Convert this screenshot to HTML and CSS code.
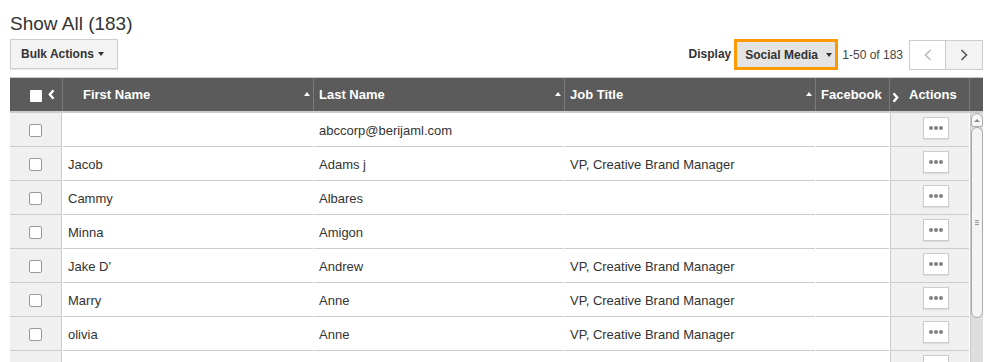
FILE: index.html
```html
<!DOCTYPE html>
<html lang="en">
<head>
    <meta charset="UTF-8">
    <title>Show All</title>
    <link rel="stylesheet" href="styles.css">
</head>
<body>
<div class="page">
    <h1 class="title">Show All (183)</h1>

    <div class="toolbar">
        <a href="#" class="btn btn_bulk">Bulk Actions <i class="caret"></i></a>
        <div class="toolbar_right">
            <span class="display_label">Display</span>
            <div class="display_box">
                <a href="#" class="btn btn_display">Social Media <i class="caret"></i></a>
            </div>
            <span class="count">1-50 of 183</span>
            <div class="pager">
                <a href="#" class="pg pg_prev">
                    <svg width="8" height="12" viewBox="0 0 8 12"><polyline points="6.5,1 1.5,6 6.5,11" fill="none" stroke="#bbb" stroke-width="1.6"/></svg>
                </a>
                <a href="#" class="pg pg_next">
                    <svg width="8" height="12" viewBox="0 0 8 12"><polyline points="1.5,1 6.5,6 1.5,11" fill="none" stroke="#555" stroke-width="1.6"/></svg>
                </a>
            </div>
        </div>
    </div>

    <div class="grid">
        <div class="grid_head">
            <div class="hcell hcell_cb">
                <span class="hbox"></span>
                <svg width="7" height="11" viewBox="0 0 7 11"><polyline points="5.5,1.2 1.8,5.5 5.5,9.8" fill="none" stroke="#fff" stroke-width="2.4"/></svg>
            </div>
            <div class="hcell hcell_first">First Name <i class="sort"></i></div>
            <div class="hcell">Last Name <i class="sort"></i></div>
            <div class="hcell">Job Title <i class="sort"></i></div>
            <div class="hcell">Facebook</div>
            <div class="hcell hcell_actions">
                <svg class="more_cols" width="7" height="11" viewBox="0 0 7 11"><polyline points="1.5,1.2 5.2,5.5 1.5,9.8" fill="none" stroke="#fff" stroke-width="2.4"/></svg>
                Actions
            </div>
            <div class="hcell hcell_scroll"></div>
        </div>

        <div class="grid_body">
            <div class="rows">
                <div class="cell cell_cb"><span class="cbox"></span></div>
                <div class="cell"></div>
                <div class="cell">abccorp@berijaml.com</div>
                <div class="cell"></div>
                <div class="cell"></div>
                <div class="cell cell_actions"><a href="#" class="btn_more"><i></i><i></i><i></i></a></div>

                <div class="cell cell_cb"><span class="cbox"></span></div>
                <div class="cell">Jacob</div>
                <div class="cell">Adams j</div>
                <div class="cell">VP, Creative Brand Manager</div>
                <div class="cell"></div>
                <div class="cell cell_actions"><a href="#" class="btn_more"><i></i><i></i><i></i></a></div>

                <div class="cell cell_cb"><span class="cbox"></span></div>
                <div class="cell">Cammy</div>
                <div class="cell">Albares</div>
                <div class="cell"></div>
                <div class="cell"></div>
                <div class="cell cell_actions"><a href="#" class="btn_more"><i></i><i></i><i></i></a></div>

                <div class="cell cell_cb"><span class="cbox"></span></div>
                <div class="cell">Minna</div>
                <div class="cell">Amigon</div>
                <div class="cell"></div>
                <div class="cell"></div>
                <div class="cell cell_actions"><a href="#" class="btn_more"><i></i><i></i><i></i></a></div>

                <div class="cell cell_cb"><span class="cbox"></span></div>
                <div class="cell">Jake D'</div>
                <div class="cell">Andrew</div>
                <div class="cell">VP, Creative Brand Manager</div>
                <div class="cell"></div>
                <div class="cell cell_actions"><a href="#" class="btn_more"><i></i><i></i><i></i></a></div>

                <div class="cell cell_cb"><span class="cbox"></span></div>
                <div class="cell">Marry</div>
                <div class="cell">Anne</div>
                <div class="cell">VP, Creative Brand Manager</div>
                <div class="cell"></div>
                <div class="cell cell_actions"><a href="#" class="btn_more"><i></i><i></i><i></i></a></div>

                <div class="cell cell_cb"><span class="cbox"></span></div>
                <div class="cell">olivia</div>
                <div class="cell">Anne</div>
                <div class="cell">VP, Creative Brand Manager</div>
                <div class="cell"></div>
                <div class="cell cell_actions"><a href="#" class="btn_more"><i></i><i></i><i></i></a></div>

                <div class="cell cell_cb"><span class="cbox"></span></div>
                <div class="cell"></div>
                <div class="cell"></div>
                <div class="cell"></div>
                <div class="cell"></div>
                <div class="cell cell_actions"><a href="#" class="btn_more"><i></i><i></i><i></i></a></div>
            </div>
            <div class="scrollbar">
                <div class="sb_up"><i></i></div>
                <div class="sb_thumb"><i></i><i></i><i></i></div>
            </div>
        </div>
    </div>
</div>
</body>
</html>
```

FILE: styles.css
```css
*{
    margin: 0;
    padding: 0;
    box-sizing: border-box;
}
body{
    font-family: "Liberation Sans", Arial, sans-serif;
    color: #333;
    background: #fff;
    overflow: hidden;
}
a{
    text-decoration: none;
    color: #333;
}
.page{
    padding: 13px 8px 0 10px;
}
.title{
    font-size: 19px;
    font-weight: normal;
    line-height: 22px;
    color: #333;
}
.toolbar{
    display: flex;
    justify-content: space-between;
    align-items: flex-start;
    margin-top: 4px;
}
.btn{
    display: flex;
    align-items: center;
    height: 30px;
    font-size: 12px;
    font-weight: bold;
    color: #333;
}
.btn_bulk{
    width: 108px;
    padding-left: 10px;
    background: #f3f3f3;
    border: 1px solid #ccc;
    box-shadow: 0 1px 1px rgba(0,0,0,.08);
}
.caret{
    display: inline-block;
    width: 0;
    height: 0;
    margin-left: 4px;
    border-top: 4px solid #333;
    border-left: 3.5px solid transparent;
    border-right: 3.5px solid transparent;
}
.toolbar_right{
    display: flex;
    align-items: center;
}
.display_label{
    font-size: 12px;
    font-weight: bold;
    margin-right: 3px;
    position: relative;
    top: -1px;
}
.display_box{
    border: 3px solid #f90;
    width: 104px;
    height: 31px;
}
.btn_display{
    height: 25px;
    padding-left: 8px;
    background: #e4e4e4;
}
.btn_display .caret{
    margin-left: 8px;
}
.count{
    font-size: 12px;
    color: #444;
    margin: 0 6px 0 4px;
}
.pager{
    display: flex;
}
.pg{
    width: 37px;
    height: 30px;
    display: flex;
    align-items: center;
    justify-content: center;
    border: 1px solid #ccc;
}
.pg_prev{
    background: #fff;
}
.pg_next{
    background: #f3f3f3;
    border-left: none;
}

.grid{
    margin-top: 7px;
    width: 973px;
}
.grid_head{
    display: grid;
    grid-template-columns: 52px 250px 250px 250px 73px 79px 13px;
    column-gap: 1px;
    background: #7a7a7a;
    border-top: 1px solid #c8c8c8;
    border-bottom: 2px solid #ccc;
}
.hcell{
    height: 33px;
    background: #5b5b5b;
    color: #fff;
    font-size: 13px;
    font-weight: bold;
    display: flex;
    align-items: center;
    justify-content: space-between;
    padding: 0 3px 0 5px;
}
.hcell_first{
    padding-left: 20px;
}
.hcell_cb{
    justify-content: flex-start;
    padding-left: 20px;
    gap: 6px;
}
.hbox{
    width: 12px;
    height: 12px;
    background: #fff;
    border-radius: 1px;
    margin-top: 3px;
}
.sort{
    width: 0;
    height: 0;
    border-bottom: 4px solid #fff;
    border-left: 3.5px solid transparent;
    border-right: 3.5px solid transparent;
    margin-bottom: 2px;
}
.hcell_actions{
    justify-content: flex-start;
    padding-left: 2px;
    gap: 10px;
}
.more_cols{
    margin-top: 5px;
}

.grid_body{
    display: flex;
    gap: 1px;
    height: 249px;
    overflow: hidden;
}
.rows{
    display: grid;
    grid-template-columns: 52px 250px 250px 250px 73px 79px;
    grid-auto-rows: 34px;
    column-gap: 1px;
    background: #fff;
}
.cell{
    border-bottom: 1px solid #ccc;
    font-size: 13px;
    color: #333;
    display: flex;
    align-items: center;
    padding: 1px 0 0 5px;
}
.cell_cb{
    background: #f0f0f0;
    border-right: 1px solid #ccc;
    justify-content: center;
    padding-left: 0;
}
.cbox{
    width: 13px;
    height: 13px;
    background: #fff;
    border: 1px solid #999;
    border-radius: 2px;
}
.cell_actions{
    background: #f0f0f0;
    border-left: 1px solid #ccc;
    align-items: flex-start;
    padding: 4px 0 0 32px;
}
.btn_more{
    width: 26px;
    height: 22px;
    background: #fff;
    border: 1px solid #ccc;
    box-shadow: 0 1px 1px rgba(0,0,0,.08);
    display: flex;
    align-items: center;
    justify-content: center;
    gap: 1px;
}
.btn_more i{
    width: 4px;
    height: 4px;
    border-radius: 50%;
    background: #808080;
}

.scrollbar{
    width: 13px;
    background: #dedede;
    border-left: 1px solid #c8c8c8;
    display: flex;
    flex-direction: column;
}
.sb_up{
    height: 14px;
    background: #f6f6f6;
    border: 1px solid #aaa;
    border-radius: 6px 6px 2px 2px;
    display: flex;
    justify-content: center;
    padding-top: 5px;
}
.sb_up i{
    width: 0;
    height: 0;
    border-bottom: 3px solid #888;
    border-left: 3px solid transparent;
    border-right: 3px solid transparent;
}
.sb_thumb{
    height: 191px;
    background: #f4f4f4;
    border: 1px solid #a8a8a8;
    border-radius: 6px;
    display: flex;
    flex-direction: column;
    align-items: center;
    justify-content: center;
    gap: 1px;
}
.sb_thumb i{
    width: 4px;
    height: 1px;
    background: #999;
}
```
